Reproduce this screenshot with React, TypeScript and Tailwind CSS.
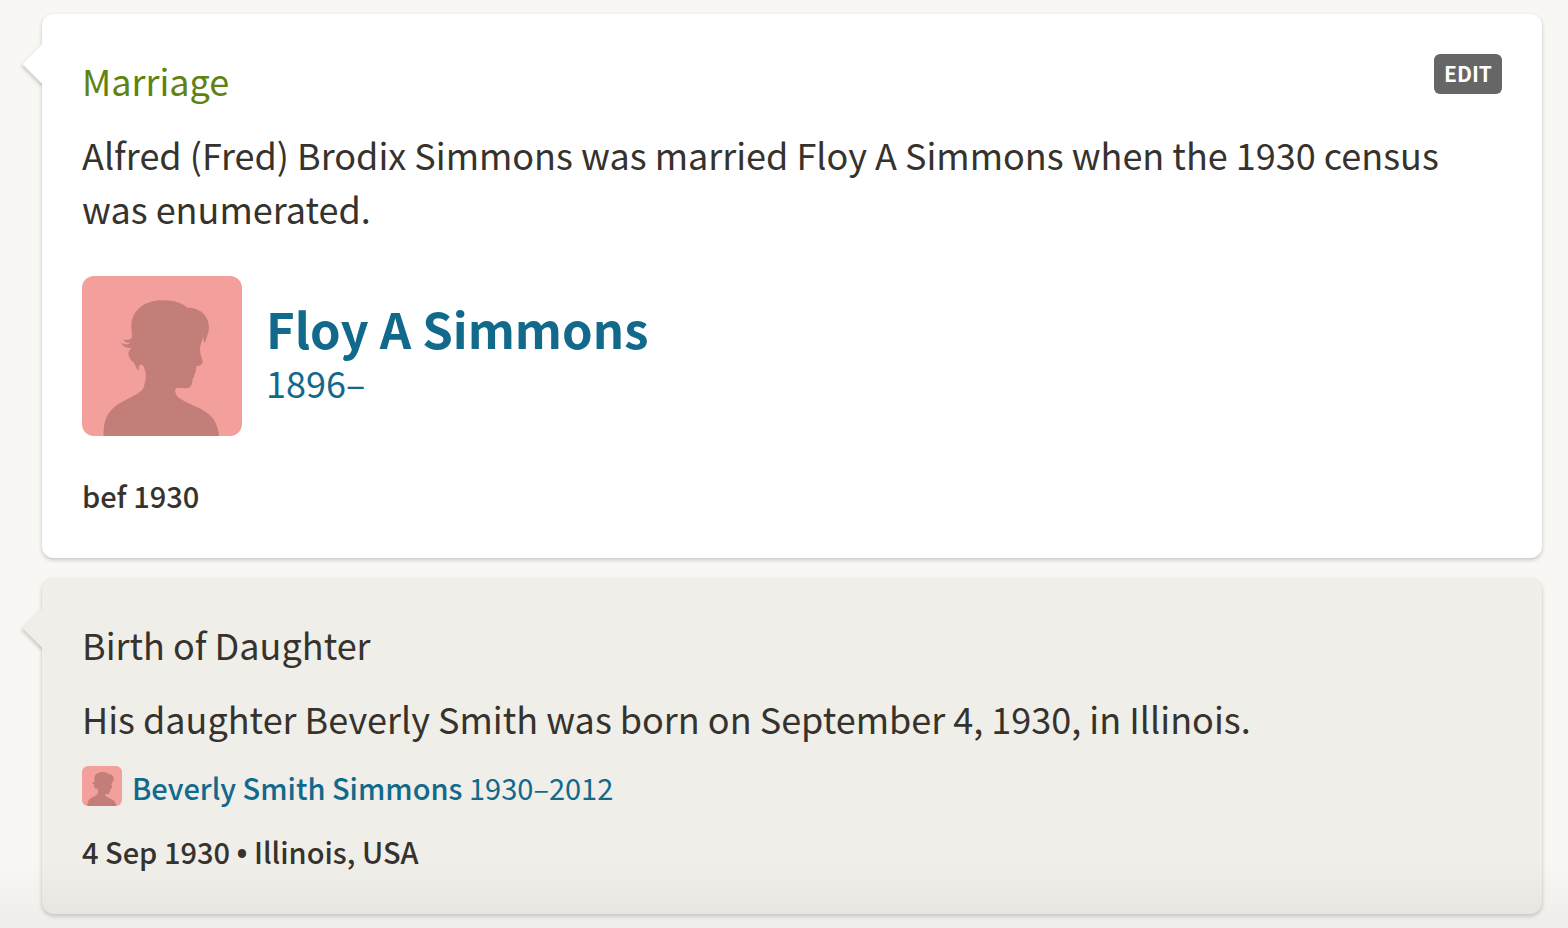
import clsx from "clsx";
import type {ReactNode} from "react";

interface EventCardProps {
    title: string;
    description: string;
    highlighted?: boolean;
    children: ReactNode;
}

const Silhouette = ({className}: {className: string}) => (
    <svg viewBox="0 0 160 160" className={className} aria-hidden="true">
        <rect width="160" height="160" fill="#f39f9b"/>
        <path
            fill="#c37e7a"
            d="M21.5 160C21.5 151 22.5 143 27 137C30 132.500 34 129 40 126L54 118.500C59 115.500 62 113 62.500 108C64 104 64.200 98 63 94.500C62 90.500 61 88.500 59 88.500C57 89 56.800 91.500 56.500 94.500C54.500 93 53.500 90.500 52.500 87.500C50.500 86 47.500 83 46.500 79C46 76 47.500 74 49.500 72C45 72 41 71 38.500 66.500C42 69 46 69 48.500 66.500C45 67 42.500 66 41 63.500C44 64.500 48 64 50 61.500C50 57 49.200 53 49.200 49C49.500 42 53 35.500 58.500 31C65 26 73 24.200 81.500 24.300C92 24.300 100 27 105.500 31.800C112 31.500 119 34 123 39.500C127.500 45.500 127.800 53 125.500 59C124.500 62 123.500 65 122.500 67C121.500 65 121 62 121.500 60C120 64 118.500 68 118 73C118 78 119.500 81.500 120.800 85C121.200 88 118 90 114.500 90C114 92 114.500 94 113.500 96C113.800 97.500 112 98.500 112 100C112.500 101.500 111.500 102 110.500 103C110.500 107 109.500 111.500 105.500 112C102 112.600 98 111.800 94.500 112.200C92.500 112.800 93 115.500 94 118C95.500 122 101 124.500 106 127L119 133C126 137 131.500 141 134 148C136 152 136.800 156 137 160Z"
        />
    </svg>
);

const EventCard = ({title, description, highlighted, children}: EventCardProps) => (
    <article
        className={clsx(
            "relative rounded-xl p-10 shadow-[0_2px_4px_rgba(0,0,0,0.2)]",
            highlighted ? "bg-white" : "bg-[#efeee9]"
        )}
    >
        {/* pointer towards the timeline */}
        <div className="absolute -left-6 top-6 h-13 w-6 overflow-hidden">
            <div
                className={clsx(
                    "ml-[10px] mt-3 size-7 rotate-45 shadow-[1px_2px_4px_rgba(0,0,0,0.2)]",
                    highlighted ? "bg-white" : "bg-[#efeee9]"
                )}
            />
        </div>
        <div className="flex items-start justify-between">
            <h2 className={clsx("text-[36px] leading-[52px]", highlighted && "text-[#5f8312]")}>{title}</h2>
            {highlighted && (
                <button
                    type="button"
                    className="h-10 w-17 rounded-md bg-[#666] pb-0.5 text-center text-[21px] leading-[38px] font-bold text-white"
                >
                    EDIT
                </button>
            )}
        </div>
        <p className="mt-[21px] text-[36px] leading-[54px]">{description}</p>
        {children}
    </article>
);

const App = () => {
    return (
        <main className="min-h-screen bg-[#f8f7f3] pt-3.5 pr-[26px] pb-3.5 pl-[42px] font-['Noto_Sans_CJK_SC',sans-serif] text-[#36322d]">
            <div className="flex flex-col gap-5">
                <EventCard
                    highlighted
                    title="Marriage"
                    description="Alfred (Fred) Brodix Simmons was married Floy A Simmons when the 1930 census was enumerated."
                >
                    <a href="#floy" className="mt-[41px] flex w-fit items-center gap-6 text-[#11698b]">
                        <Silhouette className="size-40 rounded-xl"/>
                        <span className="pb-2">
                            <span className="block text-[49px] leading-[60px] font-bold">Floy A Simmons</span>
                            <span className="block text-[36px] leading-[48px]">1896–</span>
                        </span>
                    </a>
                    <p className="mt-[38px] pb-0.5 text-[29px] leading-[42px] font-medium">bef 1930</p>
                </EventCard>
                <EventCard
                    title="Birth of Daughter"
                    description="His daughter Beverly Smith was born on September 4, 1930, in Illinois."
                >
                    <a href="#beverly" className="mt-[21px] flex w-fit items-start gap-2.5 text-[#11698b]">
                        <Silhouette className="size-10 rounded-md"/>
                        <span className="text-[29px] leading-[42px]">
                            <span className="font-medium">Beverly Smith Simmons</span> 1930–2012
                        </span>
                    </a>
                    <p className="mt-[22px] pb-0.5 text-[29px] leading-[42px] font-medium">
                        4 Sep 1930 <span className="font-['Open_Sans'] leading-none font-bold">•</span> Illinois, USA
                    </p>
                </EventCard>
            </div>
            <div className="pointer-events-none fixed inset-x-0 bottom-0 h-16 bg-linear-to-b from-transparent to-black/4"/>
        </main>
    );
};

export default App;
